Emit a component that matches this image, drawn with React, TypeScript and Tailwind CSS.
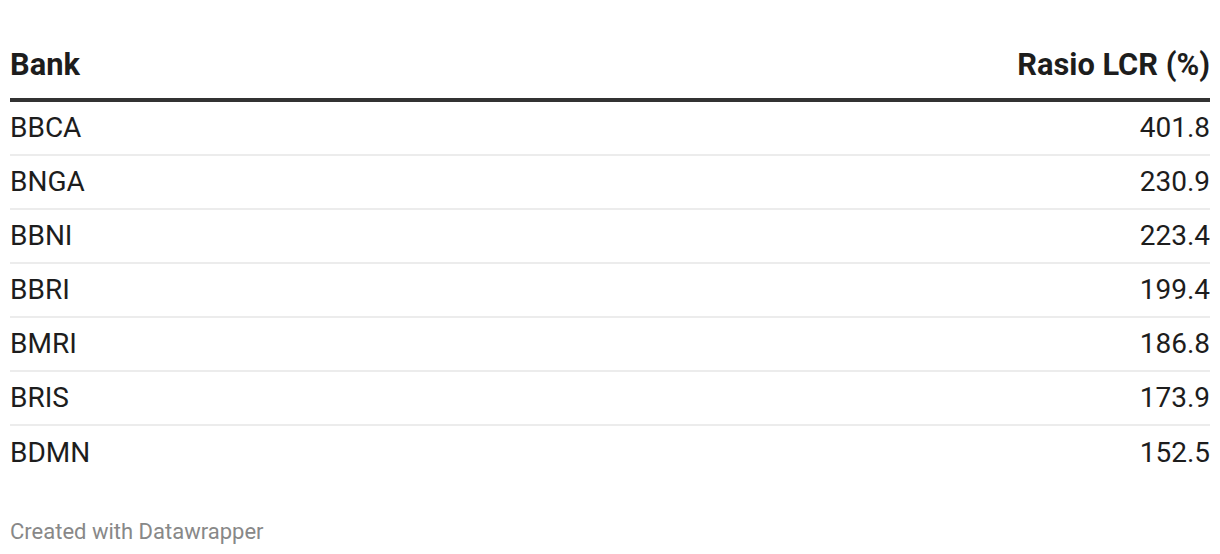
const rows = [
  { bank: 'BBCA', lcr: '401.8' },
  { bank: 'BNGA', lcr: '230.9' },
  { bank: 'BBNI', lcr: '223.4' },
  { bank: 'BBRI', lcr: '199.4' },
  { bank: 'BMRI', lcr: '186.8' },
  { bank: 'BRIS', lcr: '173.9' },
  { bank: 'BDMN', lcr: '152.5' },
]

export default function App() {
  return (
    <div className="w-[1220px] h-[554px] bg-white px-[10px] text-[#1d1d1d] font-['Roboto',sans-serif]">
      <div className="flex items-end justify-between pt-[47px] pb-[15px] border-b-4 border-[#333333] text-[30.8px] leading-[36px] font-bold">
        <div>Bank</div>
        <div>Rasio LCR (%)</div>
      </div>
      {rows.map((r, i) => (
        <div
          key={r.bank}
          className={
            'flex items-center justify-between h-[54px] text-[28px] ' +
            (i < rows.length - 1 ? 'border-b-2 border-[#ececec]' : '')
          }
        >
          <div>{r.bank}</div>
          <div>{r.lcr}</div>
        </div>
      ))}
      <div className="mt-[39px] text-[22px] leading-[26px] text-[#888888]">Created with Datawrapper</div>
    </div>
  )
}
